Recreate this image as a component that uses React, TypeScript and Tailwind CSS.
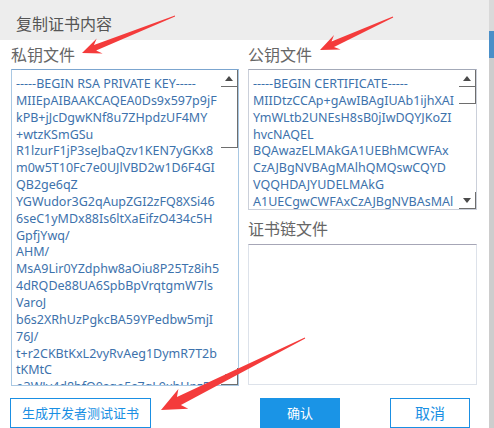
const privateKey = [
  "-----BEGIN RSA PRIVATE KEY-----",
  "MIIEpAIBAAKCAQEA0Ds9x597p9jF",
  "kPB+jJcDgwKNf8u7ZHpdzUF4MY",
  "+wtzKSmGSu",
  "R1lzurF1jP3seJbaQzv1KEN7yGKx8",
  "m0w5T10Fc7e0UJlVBD2w1D6F4GI",
  "QB2ge6qZ",
  "YGWudor3G2qAupZGI2zFQ8XSi46",
  "6seC1yMDx88Is6ltXaEifzO434c5H",
  "GpfjYwq/",
  "AHM/",
  "MsA9Lir0YZdphw8aOiu8P25Tz8ih5",
  "4dRQDe88UA6SpbBpVrqtgmW7ls",
  "VaroJ",
  "b6s2XRhUzPgkcBA59YPedbw5mjI",
  "76J/",
  "t+r2CKBtKxL2vyRvAeg1DymR7T2b",
  "tKMtC",
  "o3WJy4d8bfQ0sgo5s7qL9xhUpz5",
];

const publicKey = [
  "-----BEGIN CERTIFICATE-----",
  "MIIDtzCCAp+gAwIBAgIUAb1ijhXAI",
  "YmWLtb2UNEsH8sB0jIwDQYJKoZI",
  "hvcNAQEL",
  "BQAwazELMAkGA1UEBhMCWFAx",
  "CzAJBgNVBAgMAlhQMQswCQYD",
  "VQQHDAJYUDELMAkG",
  "A1UECgwCWFAxCzAJBgNVBAsMAl",
];

type ArrowProps = { x1: number; y1: number; x2: number; y2: number; head: number; wing: number; neck: number };

function arrowPoints({ x1, y1, x2, y2, head, wing, neck }: ArrowProps) {
  const dx = x2 - x1;
  const dy = y2 - y1;
  const len = Math.hypot(dx, dy);
  const ux = dx / len;
  const uy = dy / len;
  const nx = -uy;
  const ny = ux;
  const bx = x2 - ux * head;
  const by = y2 - uy * head;
  const p = (x: number, y: number) => `${x.toFixed(1)},${y.toFixed(1)}`;
  return [
    p(x1 + nx * 0.4, y1 + ny * 0.4),
    p(bx + ux * 2 + nx * neck, by + uy * 2 + ny * neck),
    p(bx - ux * 3 + nx * wing, by - uy * 3 + ny * wing),
    p(x2, y2),
    p(bx - ux * 3 - nx * wing, by - uy * 3 - ny * wing),
    p(bx + ux * 2 - nx * neck, by + uy * 2 - ny * neck),
    p(x1 - nx * 0.4, y1 - ny * 0.4),
  ].join(" ");
}

function ScrollButton({ dir }: { dir: "up" | "down" }) {
  return (
    <div className="flex h-[17px] items-center justify-center border-r border-b border-[#6e6e6e] bg-white">
      <svg width="8" height="5" viewBox="0 0 8 5">
        {dir === "up" ? <polygon points="0,5 8,5 4,0" fill="#4a4a4a" /> : <polygon points="0,0 8,0 4,5" fill="#4a4a4a" />}
      </svg>
    </div>
  );
}

type BoxProps = { lines: string[]; thumb: number; border: string; height: string };

function KeyBox({ lines, thumb, border, height }: BoxProps) {
  return (
    <div className={`flex overflow-hidden border bg-white ${border} ${height}`}>
      <div className="min-w-0 flex-1 overflow-hidden pt-[6px] pl-[4px] text-[12.5px] leading-[16.85px] text-[#3d72ac] [font-family:'Noto_Sans','Noto_Sans_CJK_SC',sans-serif]">
        {lines.map((l, i) => (
          <div key={i} className="whitespace-nowrap">
            {l}
          </div>
        ))}
      </div>
      <div className="flex w-[17px] flex-col">
        <ScrollButton dir="up" />
        <div className="border-r border-b border-[#6e6e6e] bg-white" style={{ height: thumb }} />
        <div className="flex-1 bg-white" />
        <ScrollButton dir="down" />
      </div>
    </div>
  );
}

export default function App() {
  const arrows: ArrowProps[] = [
    { x1: 175, y1: 16, x2: 82, y2: 53, head: 16, wing: 8, neck: 3 },
    { x1: 393, y1: 17, x2: 320, y2: 50, head: 16, wing: 8, neck: 3 },
    { x1: 305, y1: 338, x2: 161, y2: 410, head: 22, wing: 11, neck: 4.5 },
  ];

  return (
    <div className="relative flex h-[428px] w-[494px] overflow-hidden bg-white [font-family:'Noto_Sans_CJK_SC','Noto_Sans',sans-serif]">
      <div className="flex w-[489px] flex-col">
        <div className="flex h-[40px] items-center bg-[#ededed] pt-[6px] pl-[16px] text-[16px] text-[#555]">复制证书内容</div>

        <div className="flex gap-[9px] pl-[11px]">
          <div className="flex w-[228px] flex-col">
            <div className="h-[29px] text-[16px] leading-[28px] text-[#666]">私钥文件</div>
            <KeyBox lines={privateKey} thumb={61} border="border-[#a9c8e3] border-t-[#7ba5cf]" height="h-[317px]" />
          </div>
          <div className="flex w-[229px] flex-col">
            <div className="h-[29px] text-[16px] leading-[28px] text-[#666]">公钥文件</div>
            <KeyBox lines={publicKey} thumb={17} border="border-[#cbd0da] border-t-[#a3a9b8]" height="h-[141px]" />
            <div className="h-[34px] pt-[3px] text-[16px] leading-[30px] text-[#666]">证书链文件</div>
            <div className="h-[141px] border border-[#dde2ea] border-t-[#a6a6b6] bg-white" />
          </div>
        </div>

        <div className="mt-[12px] flex pl-[10px]">
          <button className="h-[30px] w-[141px] border border-[#1a8fe3] bg-white text-[13px] text-[#1a8fe3]">生成开发者测试证书</button>
          <button className="ml-[109px] h-[30px] w-[80px] bg-[#1a94e6] text-[13px] text-white">确认</button>
          <button className="ml-[50px] h-[30px] w-[80px] border border-[#1a8fe3] bg-white text-[15px] text-[#1a8fe3]">取消</button>
        </div>
      </div>

      <div className="flex w-[5px] flex-col bg-[#cdcdcd]">
        <div className="h-[31px] bg-[#d9d9d9]" />
        <div className="h-[27px] bg-[#4a8fc8]" />
      </div>

      <svg className="pointer-events-none absolute inset-0" width="494" height="428" viewBox="0 0 494 428">
        {arrows.map((a, i) => (
          <polygon key={i} points={arrowPoints(a)} fill="#f43b3b" />
        ))}
      </svg>
    </div>
  );
}
